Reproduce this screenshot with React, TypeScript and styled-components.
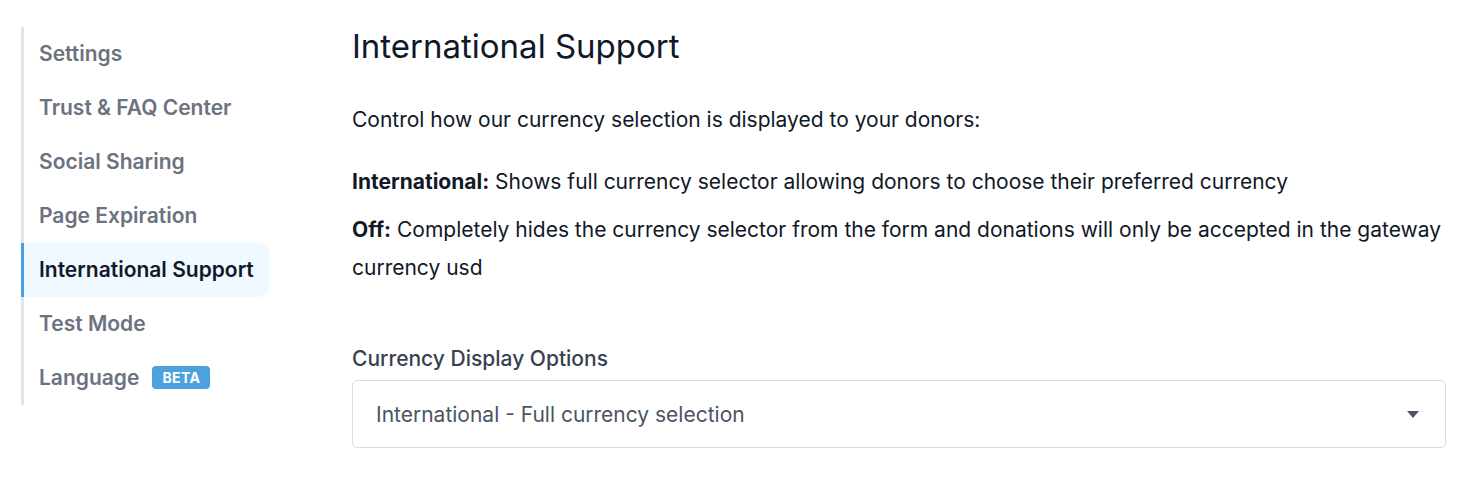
import styled, { createGlobalStyle } from "styled-components"

const navigation = [
    "Settings",
    "Trust & FAQ Center",
    "Social Sharing",
    "Page Expiration",
    "International Support",
    "Test Mode",
    "Language",
]

const GlobalStyle = createGlobalStyle`
    body {
        margin: 0;
        background: #ffffff;
        font-family: Inter, "Noto Sans", sans-serif;
        -webkit-font-smoothing: antialiased;
    }
`

const App = () => {
    return (
        <Page>
            <GlobalStyle />
            <Sidebar>
                {navigation.map((el) => (
                    <NavItem key={el} $active={el === "International Support"}>
                        {el}
                        {el === "Language" && <Badge>BETA</Badge>}
                    </NavItem>
                ))}
            </Sidebar>
            <Content>
                <Title>International Support</Title>
                <Intro>Control how our currency selection is displayed to your donors:</Intro>
                <Option>
                    <strong>International:</strong> Shows full currency selector allowing donors to choose their preferred currency
                </Option>
                <Option>
                    <strong>Off:</strong> Completely hides the currency selector from the form and donations will only be accepted in the gateway currency usd
                </Option>
                <Field>
                    <Label>Currency Display Options</Label>
                    <Select>
                        <span>International - Full currency selection</span>
                        <svg width="12" height="7" viewBox="0 0 12 7">
                            <path d="M0 0h12L6 7z" fill="#4b5563" />
                        </svg>
                    </Select>
                </Field>
            </Content>
        </Page>
    )
}

export default App

const Page = styled.div`
    display: flex;
    align-items: flex-start;
    padding: 27px 24px 0 21px;
`

const Sidebar = styled.nav`
    display: flex;
    flex-direction: column;
    width: 245px;
    border-left: 3px solid #e5e5e5;
    flex-shrink: 0;
`

const NavItem = styled.div<{ $active?: boolean }>`
    display: flex;
    align-items: center;
    gap: 13px;
    height: 54px;
    box-sizing: border-box;
    padding: 0 0 2px 15px;
    margin-left: -3px;
    border-left: 3px solid ${(p) => (p.$active ? "#4a9fe0" : "transparent")};
    border-radius: 0 10px 10px 0;
    background: ${(p) => (p.$active ? "#f0f9ff" : "transparent")};
    color: ${(p) => (p.$active ? "#111827" : "#6b7280")};
    font-size: 21px;
    font-weight: 600;
    white-space: nowrap;
`

const Badge = styled.span`
    display: inline-flex;
    align-items: center;
    height: 23px;
    padding: 0 10px;
    border-radius: 4px;
    background: #4aa3df;
    color: #ffffff;
    font-size: 14px;
    font-weight: 700;
    letter-spacing: 0.4px;
`

const Content = styled.main`
    flex: 1;
    margin-left: 83px;
    color: #111827;
`

const Title = styled.h1`
    margin: 0;
    font-size: 33px;
    font-weight: 400;
    line-height: 38px;
    color: #0f172a;
`

const Intro = styled.p`
    margin: 36px 0 24px;
    font-size: 21px;
    line-height: 38px;
`

const Option = styled.p`
    margin: 0 0 10px;
    font-size: 21px;
    line-height: 38px;

    strong {
        font-weight: 700;
    }
`

const Field = styled.div`
    margin-top: 60px;
`

const Label = styled.div`
    font-size: 21px;
    font-weight: 500;
    color: #374151;
    line-height: 24px;
    margin-bottom: 9px;
`

const Select = styled.div`
    display: flex;
    align-items: center;
    justify-content: space-between;
    height: 68px;
    box-sizing: border-box;
    padding: 0 26px 0 23px;
    border: 1px solid #dcdcdc;
    border-radius: 5px;
    color: #4b5563;
    font-size: 21px;
`
